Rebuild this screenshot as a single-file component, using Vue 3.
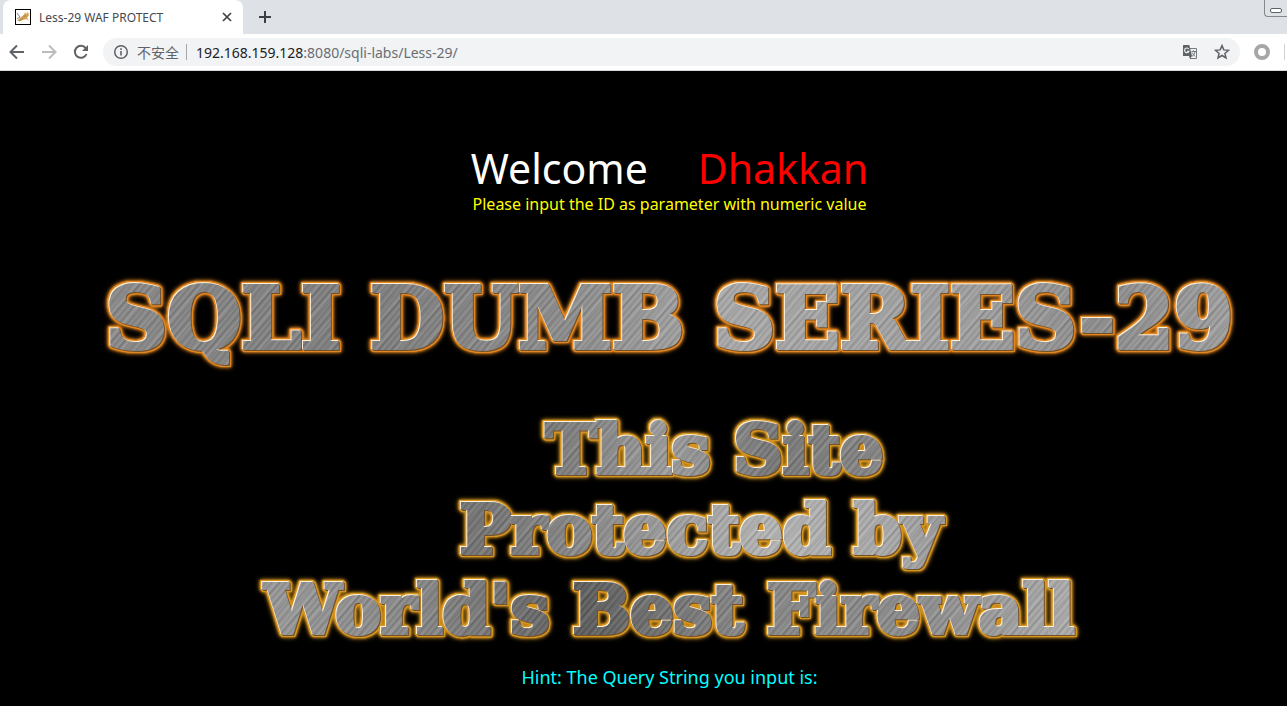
<script setup>
const host = '192.168.159.128'
const path = ':8080/sqli-labs/Less-29/'
</script>

<template>
  <div class="browser">
    <header class="tabs">
      <div class="tab">
        <svg class="favicon" viewBox="0 0 16 16" aria-hidden="true">
          <rect x="0.5" y="0.5" width="15" height="15" fill="#fff" stroke="#000" />
          <path d="M6 8 9 6 10 3 11 5 13 3 14 6 12 9 14 12 11 10 8 11 5 12 2 12 4 10Z" fill="#d9a24c" />
          <path d="M2 4 5 8 2 10M4 12 8 9M8 7 11 7" fill="none" stroke="#8d8275" />
        </svg>
        <span class="tab-title">Less-29 WAF PROTECT</span>
        <button class="plain close" aria-label="Close tab">
          <svg viewBox="0 0 10 10" width="10" height="10"><path d="m1 1 8 8M9 1 1 9" stroke="#3c4043" stroke-width="1.7" /></svg>
        </button>
      </div>
      <button class="plain add" aria-label="New tab">
        <svg viewBox="0 0 12 12" width="12" height="12"><path d="M6 0v12M0 6h12" stroke="#3c4043" stroke-width="2" /></svg>
      </button>
      <button class="minimise" aria-label="Minimise"><span></span></button>
    </header>

    <nav class="toolbar">
      <button class="plain nav" aria-label="Back">
        <svg viewBox="0 0 16 16" width="16" height="16"><path d="M15 8H2M8 1.5 1.5 8 8 14.5" fill="none" stroke="#5f6368" stroke-width="2" /></svg>
      </button>
      <button class="plain nav" aria-label="Forward">
        <svg viewBox="0 0 16 16" width="16" height="16"><path d="M1 8h13M8 1.5 14.5 8 8 14.5" fill="none" stroke="#babcbe" stroke-width="2" /></svg>
      </button>
      <button class="plain nav" aria-label="Reload">
        <svg viewBox="0 0 16 16" width="16" height="16"><path d="M13.5 10A6 6 0 1 1 12.7 4.2" fill="none" stroke="#5f6368" stroke-width="2" /><path d="M15 1v6H9Z" fill="#5f6368" /></svg>
      </button>
      <div class="address">
        <svg viewBox="0 0 16 16" width="16" height="16" aria-hidden="true"><circle cx="8" cy="8" r="6.3" fill="none" stroke="#5f6368" stroke-width="1.5" /><path d="M8 7v4.5M8 4.3v1.6" stroke="#5f6368" stroke-width="1.6" /></svg>
        <span class="insecure">不安全</span>
        <span class="divider"></span>
        <a class="url" href="#">{{ host }}<span>{{ path }}</span></a>
        <button class="plain action" aria-label="Translate">
          <svg viewBox="0 0 16 16" width="16" height="16">
            <path d="M7 4.5h7.5v10H8" fill="#f1f3f4" stroke="#777a7e" />
            <path d="M1.5 1h5.8l2.7 11H1.5Q1 12 1 11.5v-10Q1 1 1.5 1Z" fill="#5f6368" />
            <path d="M7 12h3l-2 3Z" fill="#5f6368" />
            <path d="M6.8 5A2.3 2.3 0 1 0 7 7.2H5" fill="none" stroke="#f1f3f4" stroke-width="1.1" />
            <path d="M9.5 7.5H14M11.5 6.3v1.2M10 8.5l3 4M13 8q-.5 3-3 4.3" fill="none" stroke="#777a7e" />
          </svg>
        </button>
        <button class="plain action" aria-label="Bookmark">
          <svg viewBox="0 0 16 16" width="16" height="16"><path d="m8 1.6 1.8 4.3 4.7.4-3.6 3.1 1.1 4.6L8 11.5 4 14l1.1-4.6-3.6-3.1 4.7-.4Z" fill="none" stroke="#5f6368" stroke-width="1.5" /></svg>
        </button>
      </div>
      <button class="plain extension" aria-label="Extension"><span></span></button>
      <span class="edge"></span>
    </nav>

    <main>
      <h1><span>Welcome</span><span class="name">Dhakkan</span></h1>
      <p class="prompt">Please input the ID as parameter with numeric value</p>
      <h2 class="glow series"><span class="metal">SQLI DUMB SERIES-29</span></h2>
      <div class="glow gold firewall">
        <div class="metal site">This Site</div>
        <div class="metal protect">Protected by</div>
        <div class="metal worlds">World's Best Firewall</div>
      </div>
      <p class="hint">Hint: The Query String you input is:</p>
    </main>
  </div>
</template>

<style>
html, body { background: #000; }
body { margin: 0; }
</style>

<style scoped>
.browser { font-family: "Noto Sans", "Noto Sans CJK SC", sans-serif; min-height: 100vh; overflow: hidden; }
.plain { border: 0; background: none; padding: 0; display: flex; align-items: center; justify-content: center; }
.tabs { display: flex; height: 34px; background: #dee1e6; padding-left: 3px; }
.tab { display: flex; align-items: center; box-sizing: border-box; width: 240px; padding: 0 11px 0 12px; background: #fff; border-radius: 8px 8px 0 0; }
.favicon { width: 16px; height: 16px; margin-right: 8px; }
.tab-title { flex: 1; font-size: 12px; color: #45494d; white-space: nowrap; }
.add { width: 44px; }
.close { width: 10px; }
.minimise { margin-left: auto; width: 23px; height: 17px; padding: 0; border: 1px solid #85888c; border-width: 0 0 1px 1px; border-radius: 0 0 0 4px; background: #dee1e6; display: flex; align-items: center; justify-content: center; }
.minimise span { width: 10px; height: 3px; border: 1px solid #5f6368; border-radius: 2px; margin-top: 4px; background: #fff; }
.toolbar { display: flex; align-items: center; height: 36px; background: #fff; border-bottom: 1px solid #d5d7da; padding-left: 1px; }
.nav { width: 32px; height: 32px; }
.address { display: flex; align-items: center; flex: 1; box-sizing: border-box; height: 28px; margin-left: 6px; padding: 0 10px; border-radius: 14px; background: #f1f3f4; font-size: 14px; }
.insecure { font-family: "Noto Sans CJK SC", sans-serif; color: #5f6368; margin-left: 8px; }
.divider { width: 1px; height: 16px; background: #a5a8ab; margin: 0 9px 0 7px; }
.url { flex: 1; color: #202124; text-decoration: none; }
.url span { color: #6a6e72; }
.action { width: 16px; margin-left: 16px; }
.extension { width: 44px; }
.extension span { width: 8px; height: 8px; border: 4px solid #a6a6a6; border-radius: 50%; }
.edge { width: 3px; height: 16px; border-left: 1px solid #cfd1d4; box-sizing: border-box; }
main { padding: 69px 0 0 52px; text-align: center; background: #000; }
h1 { display: flex; justify-content: center; gap: 50px; margin: 0; font-size: 41px; line-height: 56px; font-weight: 400; color: #fff; }
.name { color: #f00; }
.prompt { margin: 0; font-size: 16px; line-height: 16px; color: #ff0; }
.glow {
  --edge: #e2861f;
  margin: 0;
  font-family: "DejaVu Serif", serif;
  font-weight: 700;
  white-space: nowrap;
  filter: drop-shadow(-1px -1px 0 #fff2dc) drop-shadow(1px 1px 0 #71502b)
    drop-shadow(1px 0 0 var(--edge)) drop-shadow(-1px 0 0 var(--edge))
    drop-shadow(0 1px 0 var(--edge)) drop-shadow(0 -1px 0 var(--edge))
    drop-shadow(0 0 1px var(--edge)) drop-shadow(0 0 2px var(--edge));
}
.gold { --edge: #d6951f; }
.metal {
  --tone: linear-gradient(90deg, #8b8b8b, #7c7c7c 25%, #8c8c8c 42%, #a8a8a8 55%, #9e9e9e 75%, #8c8c8c 85%, #a6a6a6);
  display: block;
  color: transparent;
  -webkit-text-stroke: 4px transparent;
  background:
    repeating-linear-gradient(130deg, #ffffff16 0 1px, #0000000e 2px 3px, #ffffff0c 4px 5px),
    repeating-linear-gradient(132deg, #0000000c 0 2px, #ffffff0e 3px 7px, #00000014 8px 9px, #0000 10px 17px),
    var(--tone);
  -webkit-background-clip: text;
  background-clip: text;
}
.series { margin-top: 56px; font-size: 85px; line-height: 100px; }
.firewall { margin-top: 41px; font-size: 68px; line-height: 80px; }
.site { --tone: linear-gradient(90deg, #777 40%, #9c9c9c 50%, #777 58%, #888 70%); padding-left: 90px; }
.protect { --tone: linear-gradient(90deg, #737373 35%, #858585 42%, #b4b4b4 58%, #a8a8a8 68%, #929292 74%); padding-left: 62px; }
.worlds { --tone: linear-gradient(90deg, #959595 20%, #858585 30%, #5c5c5c 43%, #858585 56%, #8b8b8b 70%, #aaa 82%); }
.hint { margin: 14px 0 0; font-size: 18px; line-height: 28px; color: #0ff; }
</style>
